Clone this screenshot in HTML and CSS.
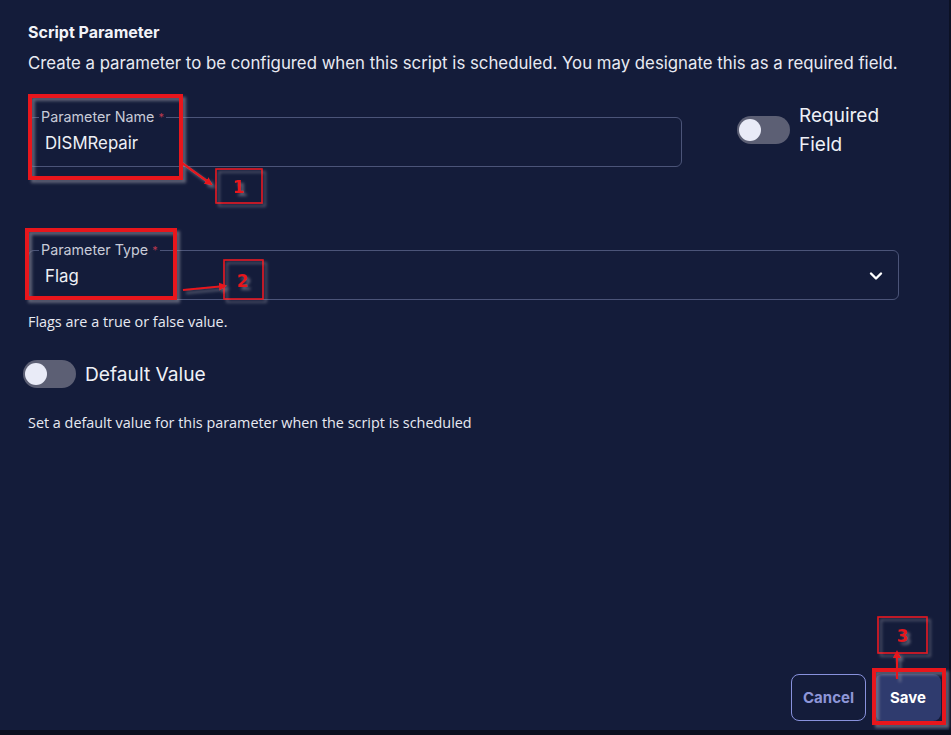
FILE: index.html
```html
<!DOCTYPE html>
<html>
<head>
<meta charset="utf-8">
<link rel="stylesheet" href="styles.css">
</head>
<body>
<div class="page">
  <main class="panel">
    <h1 class="title">Script Parameter</h1>
    <p class="desc">Create a parameter to be configured when this script is scheduled. You may designate this as a required field.</p>

    <div class="row-name">
      <fieldset class="field field-name">
        <legend class="legend">Parameter Name <span class="req">*</span></legend>
        <div class="value">DISMRepair</div>
      </fieldset>
      <div class="req-toggle">
        <span class="switch"><span class="knob"></span></span>
        <span class="req-label">Required<br>Field</span>
      </div>
    </div>

    <fieldset class="field field-type">
      <legend class="legend">Parameter Type <span class="req">*</span></legend>
      <div class="value value-select">
        <span>Flag</span>
        <svg class="chev" width="14" height="10" viewBox="0 0 14 10"><path d="M2 2.5 L7 7.5 L12 2.5" fill="none" stroke="#ffffff" stroke-width="2.4" stroke-linecap="round" stroke-linejoin="round"/></svg>
      </div>
    </fieldset>
    <p class="help help-flag">Flags are a true or false value.</p>

    <div class="default-row">
      <span class="switch"><span class="knob"></span></span>
      <span class="default-label">Default Value</span>
    </div>
    <p class="help help-default">Set a default value for this parameter when the script is scheduled</p>

    <div class="actions">
      <button class="btn btn-cancel">Cancel</button>
      <button class="btn btn-save">Save</button>
    </div>
  </main>
  <div class="edge"></div>
</div>
<div class="bottom-strip"></div>

<svg class="annot" width="951" height="735" viewBox="0 0 951 735">
  <defs>
    <filter id="sh" x="-20%" y="-20%" width="150%" height="150%">
      <feDropShadow dx="3" dy="3" stdDeviation="1.5" flood-color="#9a9aa6" flood-opacity="0.55"/>
    </filter>
    <marker id="ah" markerWidth="8" markerHeight="8" refX="6" refY="4" orient="auto" markerUnits="userSpaceOnUse">
      <path d="M0 0 L8 4 L0 8 Z" fill="#e8141c"/>
    </marker>
  </defs>
  <g filter="url(#sh)" fill="none" stroke="#e8141c">
    <rect x="30" y="96" width="151" height="82" stroke-width="4"/>
    <rect x="27" y="230" width="148" height="68" stroke-width="4"/>
    <rect x="874" y="670" width="70" height="53" stroke-width="4"/>
    <rect x="216" y="169" width="46" height="34" stroke-width="1.6"/>
    <rect x="224" y="260" width="39" height="39" stroke-width="1.6"/>
    <rect x="878" y="617" width="49" height="36" stroke-width="1.6"/>
    <line x1="182" y1="163" x2="211" y2="184" stroke-width="2.2" marker-end="url(#ah)"/>
    <line x1="183" y1="290" x2="225" y2="286" stroke-width="2.2" marker-end="url(#ah)"/>
    <line x1="897" y1="679" x2="897" y2="652" stroke-width="2.2" marker-end="url(#ah)"/>
  </g>
  <g filter="url(#sh)" class="annot-num">
    <text x="239" y="193">1</text>
    <text x="243" y="287">2</text>
    <text x="903" y="642">3</text>
  </g>
</svg>
</body>
</html>
```
FILE: styles.css
```css
* { box-sizing: border-box; }
html, body {
  margin: 0;
  padding: 0;
  background: #141c3a;
  width: 951px;
  height: 735px;
  overflow: hidden;
}
body {
  font-family: Inter, "Noto Sans", sans-serif;
  color: #e8eaf2;
}
.page {
  display: flex;
  height: 730px;
}
.panel {
  flex: 1;
  display: flex;
  flex-direction: column;
  padding: 22px 0 0 28px;
}
.edge {
  width: 2px;
  background: #0c1124;
}
.bottom-strip {
  height: 5px;
  background: #0b0f1f;
}
.title {
  margin: 0;
  font-size: 16px;
  line-height: 20px;
  font-weight: 700;
  color: #f2f3f8;
}
.desc {
  margin: 10px 0 0;
  font-size: 16.8px;
  line-height: 22px;
  color: #e8eaf2;
  white-space: nowrap;
}
.row-name {
  display: flex;
  align-items: flex-start;
  margin-top: 27px;
}
.field {
  margin: 0;
  border: 1px solid #4b5478;
  border-radius: 6px;
  padding: 0 15px 11px 10px;
  min-width: 0;
}
.field-name {
  width: 654px;
  margin-top: 8px;
}
.field-type {
  width: 871px;
  margin-top: 75px;
}
.legend {
  padding: 0 2px;
  font-size: 14.3px;
  line-height: 16px;
  color: #c8cbd8;
}
.req {
  color: #b8394e;
  font-size: 11px;
  vertical-align: top;
}
.value {
  margin-top: 6px;
  padding-left: 6px;
  font-size: 16.8px;
  line-height: 24px;
  color: #eef0f6;
}
.value-select {
  display: flex;
  justify-content: space-between;
  align-items: center;
}
.chev { display: block; }
.req-toggle {
  display: flex;
  align-items: center;
  margin-left: 55px;
  margin-top: 0;
}
.switch {
  position: relative;
  display: inline-block;
  width: 53px;
  height: 28px;
  border-radius: 14px;
  background: #5c5f74;
  flex: none;
}
.knob {
  position: absolute;
  left: 2px;
  top: 3px;
  width: 22px;
  height: 22px;
  border-radius: 50%;
  background: #e9ebf7;
}
.req-label {
  margin-left: 9px;
  font-size: 19px;
  line-height: 29px;
  color: #eef0f6;
}
.help {
  margin: 0;
  font-family: "Open Sans", "Noto Sans", sans-serif;
  font-size: 14.4px;
  line-height: 18px;
  color: #e8eaf2;
}
.help-flag { margin-top: 13px; }
.default-row {
  display: flex;
  align-items: center;
  margin: 29px 0 0 -5px;
}
.default-label {
  margin-left: 9px;
  font-size: 19.2px;
  line-height: 28px;
  color: #eef0f6;
}
.help-default { margin-top: 26px; }
.actions {
  margin-top: auto;
  display: flex;
  justify-content: flex-end;
  gap: 9px;
  padding: 0 8px 9px 0;
}
.btn {
  height: 47px;
  border-radius: 8px;
  font-family: Inter, "Noto Sans", sans-serif;
  font-size: 15px;
  font-weight: 700;
}
.btn-cancel {
  width: 75px;
  background: transparent;
  border: 1px solid #8891dc;
  color: #8e96d8;
}
.btn-save {
  width: 66px;
  background: #2f3b6e;
  border: none;
  color: #ffffff;
}
.annot {
  position: absolute;
  left: 0;
  top: 0;
  pointer-events: none;
}
.annot-num text {
  font-family: "DejaVu Sans", sans-serif;
  font-weight: 700;
  font-size: 17px;
  fill: #e8141c;
  text-anchor: middle;
}
```
